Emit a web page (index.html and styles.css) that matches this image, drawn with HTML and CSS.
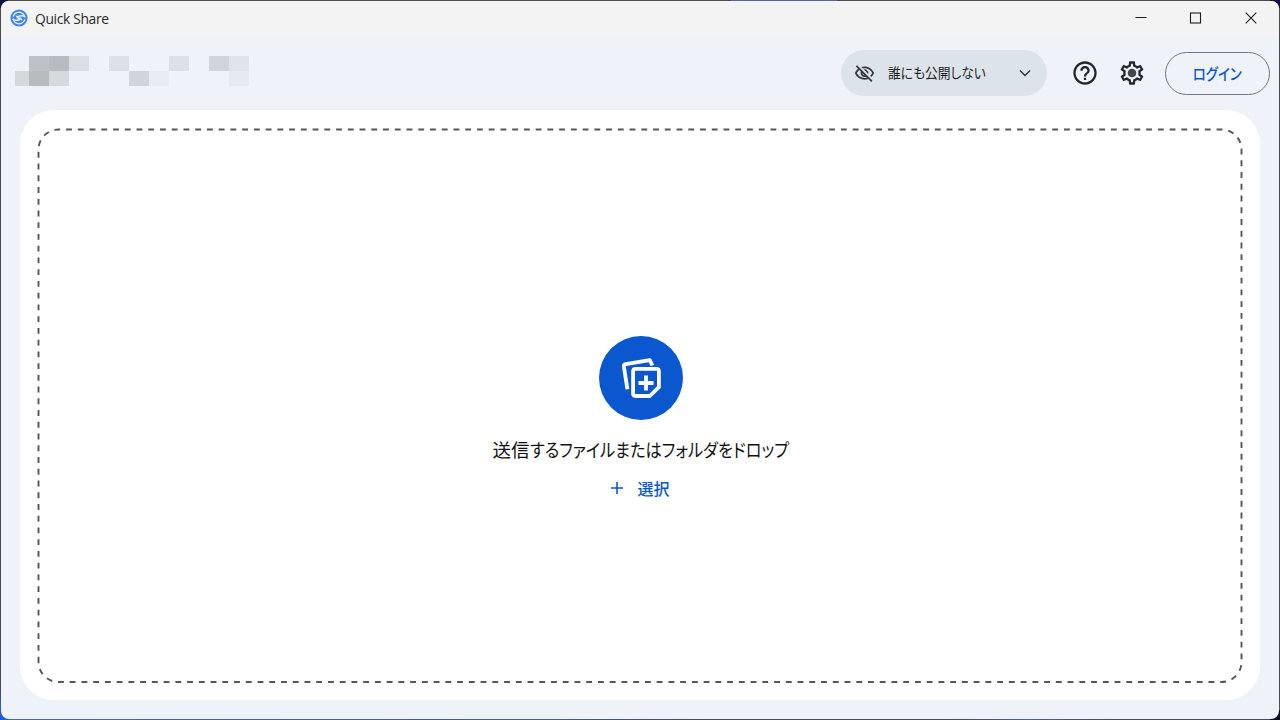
FILE: index.html
```html
<!DOCTYPE html>
<html lang="ja">
<head>
<meta charset="utf-8">
<title>Quick Share</title>
<link rel="stylesheet" href="styles.css">
</head>
<body>
<div class="desktop">
<div class="window">
  <header class="titlebar">
    <svg class="app-icon" viewBox="0 0 18 18"><circle cx="9" cy="9" r="8.6" fill="#3f83ee"/><g fill="none" stroke="#e4efff" stroke-width="1.4" stroke-linecap="round" stroke-linejoin="round"><path d="M3.3 7.1C4.4 3.7 8.4 2.2 11.6 3.8C13.3 4.7 14.3 6 14.7 7.7M14.7 10.9C13.6 14.3 9.6 15.8 6.4 14.2C4.7 13.3 3.7 12 3.3 10.3"/><path d="M3.3 10.2C5.6 11.8 7.5 11.6 9.8 10.5M14.7 7.8C12.4 6.2 10.5 6.4 8.2 7.5M6.5 7.2L8.3 9.3L10.6 9.1L11.7 10.8"/></g></svg>
    <span class="app-name">Quick Share</span>
    <div class="controls">
      <svg viewBox="0 0 16 16"><path d="M2.5 7.5H13.5"/></svg>
      <svg viewBox="0 0 16 16"><rect x="2.5" y="3" width="10" height="10"/></svg>
      <svg viewBox="0 0 16 16"><path d="M2.7 2.7L13.3 13.3M13.3 2.7L2.7 13.3"/></svg>
    </div>
  </header>
  <div class="toolbar">
    <svg class="device" viewBox="0 0 236 32" shape-rendering="crispEdges">
      <path fill="#bec2c8" d="M14 1h20v15H14z"/><path fill="#b8bbc1" d="M34 1h20v15H34z"/><path fill="#dbdfe2" d="M54 1h20v15H54z"/>
      <path fill="#d5d9dc" d="M0 16h14v15H0z"/><path fill="#b9bcbe" d="M14 16h20v15H14z"/><path fill="#d6dadd" d="M34 16h20v15H34z"/>
      <path fill="#dce0e8" d="M94 1h20v15H94zM154 1h20v15h-20z"/><path fill="#d1d4da" d="M114 16h20v15h-20zM194 1h20v15h-20z"/>
      <path fill="#e9ecf1" d="M134 16h20v15h-20z"/><path fill="#e0e3e7" d="M214 1h20v15h-20z"/><path fill="#e6e9ee" d="M214 16h20v15h-20z"/>
    </svg>
    <div class="visibility">
      <svg class="eye" viewBox="0 0 24 24"><path d="M12 6c3.79 0 7.17 2.13 8.82 5.5-.59 1.22-1.42 2.27-2.41 3.12l1.41 1.41c1.39-1.23 2.49-2.77 3.18-4.53C21.27 7.11 17 4 12 4c-1.27 0-2.49.2-3.64.57l1.65 1.65C10.66 6.09 11.32 6 12 6zm-1.07 1.14L13 9.21c.57.25 1.03.71 1.28 1.28l2.07 2.07c.08-.34.14-.7.14-1.07C16.5 9.01 14.48 7 12 7c-.37 0-.72.05-1.07.14zM2.01 3.87l2.68 2.68C3.06 7.83 1.77 9.53 1 11.5 2.73 15.89 7 19 12 19c1.52 0 2.98-.29 4.32-.82l3.42 3.42 1.41-1.41L3.42 2.45 2.01 3.87zm7.5 7.5l2.61 2.61c-.04.01-.08.02-.12.02-1.38 0-2.5-1.12-2.5-2.5 0-.05.01-.08.01-.13zm-3.4-3.4l1.75 1.75c-.23.55-.36 1.15-.36 1.78 0 2.48 2.02 4.5 4.5 4.5.63 0 1.23-.13 1.77-.36l.98.98c-.88.24-1.8.38-2.75.38-3.79 0-7.17-2.13-8.82-5.5.7-1.43 1.72-2.61 2.93-3.53z"/></svg>
      <span class="visibility-label">誰にも公開しない</span>
      <svg class="chevron" viewBox="0 0 12 12"><path d="M1 3.5L6 8.5L11 3.5"/></svg>
    </div>
    <svg class="tool help" viewBox="0 0 24 24"><path d="M11 18h2v-2h-2v2zm1-16C6.48 2 2 6.48 2 12s4.48 10 10 10 10-4.48 10-10S17.52 2 12 2zm0 18c-4.41 0-8-3.59-8-8s3.59-8 8-8 8 3.59 8 8-3.59 8-8 8zm0-14c-2.21 0-4 1.79-4 4h2c0-1.1.9-2 2-2s2 .9 2 2c0 2-3 1.75-3 5h2c0-2.25 3-2.5 3-5 0-2.21-1.79-4-4-4z"/></svg>
    <svg class="tool gear" viewBox="0 0 24 24"><path d="M19.43 12.98c.04-.32.07-.64.07-.98s-.03-.66-.07-.98l2.11-1.65c.19-.15.24-.42.12-.64l-2-3.46c-.09-.16-.26-.25-.44-.25-.06 0-.12.01-.17.03l-2.49 1c-.52-.4-1.08-.73-1.69-.98l-.38-2.65C14.46 2.18 14.25 2 14 2h-4c-.25 0-.46.18-.49.42l-.38 2.65c-.61.25-1.17.59-1.69.98l-2.49-1c-.06-.02-.12-.03-.18-.03-.17 0-.34.09-.43.25l-2 3.46c-.13.22-.07.49.12.64l2.11 1.65c-.04.32-.07.65-.07.98s.03.66.07.98l-2.11 1.65c-.19.15-.24.42-.12.64l2 3.46c.09.16.26.25.44.25.06 0 .12-.01.17-.03l2.49-1c.52.4 1.08.73 1.69.98l.38 2.65c.03.24.24.42.49.42h4c.25 0 .46-.18.49-.42l.38-2.65c.61-.25 1.17-.59 1.69-.98l2.49 1c.06.02.12.03.18.03.17 0 .34-.09.43-.25l2-3.46c.12-.22.07-.49-.12-.64l-2.11-1.65zm-1.98-1.71c.04.31.05.52.05.73 0 .21-.02.43-.05.73l-.14 1.13.89.7 1.08.84-.7 1.21-1.27-.51-1.04-.42-.9.68c-.43.32-.84.56-1.25.73l-1.06.43-.16 1.13-.2 1.35h-1.4l-.19-1.35-.16-1.13-1.06-.43c-.43-.18-.83-.41-1.23-.71l-.91-.7-1.06.43-1.27.51-.7-1.21 1.08-.84.89-.7-.14-1.13c-.03-.31-.05-.54-.05-.74s.02-.43.05-.73l.14-1.13-.89-.7-1.08-.84.7-1.21 1.27.51 1.04.42.9-.68c.43-.32.84-.56 1.25-.73l1.06-.43.16-1.13.2-1.35h1.39l.19 1.35.16 1.13 1.06.43c.43.18.83.41 1.23.71l.91.7 1.06-.43 1.27-.51.7 1.21-1.07.85-.89.7.14 1.13z"/><circle cx="12" cy="12" r="3.7" opacity=".85"/></svg>
    <button class="login"><span>ログイン</span></button>
  </div>
  <main class="panel">
    <svg class="dashes" viewBox="0 0 1240 590"><path d="M18.5 552.5V39.5A20 20 0 0 1 38.5 19.5H1201.5A20 20 0 0 1 1221.5 39.5V552A20 20 0 0 1 1201.5 572H38.5A20 20 0 0 1 18.5 552"/></svg>
    <div class="drop">
      <svg class="badge" viewBox="0 0 84 84"><circle cx="42" cy="42" r="42" fill="#0b57d0"/><g fill="none" stroke="#fff" stroke-width="3.8" stroke-linejoin="round"><path d="M53.4 29.5L50.8 24.1L26.7 28.1Q24.6 28.5 24.9 30.6L28.4 53.2"/><path d="M36.6 32.8H57.4Q59.9 32.8 59.9 35.3V51.2L50.8 60H36.6Q34.1 60 34.1 57.5V35.3Q34.1 32.8 36.6 32.8Z"/><path d="M47 39.5V54.5M39.5 47H54.5"/></g></svg>
      <p class="message">送信<span>するファイルまたはフォルダをドロップ</span></p>
      <div class="select"><svg viewBox="0 0 12 12"><path d="M6 0V12M0 6H12"/></svg><span>選択</span></div>
    </div>
  </main>
</div>
</div>
</body>
</html>
```

FILE: styles.css
```css
* { box-sizing: border-box; }
body { margin: 0; font-family: "Noto Sans CJK JP", sans-serif; }
.desktop {
  width: 1280px; height: 720px; padding: 1px; overflow: hidden;
  background:
    linear-gradient(#5563b4, #5563b4) 731px 0 / 106px 1px no-repeat,
    linear-gradient(90deg, #4a68a8, #3f5f8c 550px, #484b52 700px, #484b52 940px, #4d6485 1020px, #484b52 1110px) 8px 719px / 1262px 1px no-repeat,
    linear-gradient(#14143a, #14143a) 1270px 0 / 10px 8px no-repeat,
    linear-gradient(#0c1024, #0c1024) 1270px 710px / 10px 10px no-repeat,
    linear-gradient(#4b4b50, #4b4b50) 8px 0 / 1272px 720px no-repeat,
    linear-gradient(#14143a 0 8px, #4b4b50 8px 690px, #2459dc 705px);
}
.window { width: 1278px; height: 718px; border-radius: 8px; overflow: hidden; background: #eff3f9; display: flex; flex-direction: column; }
.titlebar { height: 35px; flex: none; background: #f3f3f3; display: flex; align-items: center; padding: 0 20px 1px 9px; }
.app-icon { width: 18px; height: 18px; }
.app-name { margin-left: 7px; font: 13.8px/18px "Open Sans", sans-serif; color: #292929; letter-spacing: -.32px; padding-top: 1px; }
.controls { margin-left: auto; display: flex; gap: 39px; }
.controls svg { width: 16px; height: 16px; fill: none; stroke: #1d1d1d; stroke-width: 1.1; }
.toolbar { height: 74px; flex: none; display: flex; align-items: center; padding: 0 9px 0 14px; }
.device { width: 236px; height: 32px; margin-top: -5px; }
.visibility { width: 206px; height: 46px; margin-left: auto; border-radius: 23px; background: #dde3ea; display: flex; align-items: center; padding: 0 16px 0 13px; }
.eye { width: 21px; height: 21px; fill: #34373b; }
.visibility-label { flex: 1; margin-left: 13px; font-size: 14px; line-height: 20px; color: #1f1f1f; white-space: nowrap; font-feature-settings: "palt"; transform: scaleX(.91); transform-origin: left; position: relative; top: -1px; }
.chevron { width: 12px; height: 12px; fill: none; stroke: #303236; stroke-width: 1.4; }
.tool { width: 28px; height: 28px; fill: #25282b; }
.help { margin-left: 24px; }
.gear { margin-left: 19px; }
.login { width: 105px; height: 43px; margin-left: 19px; border: 1px solid #74777b; border-radius: 22px; background: transparent; color: #0b57d0; font: 500 16px "Noto Sans CJK JP", sans-serif; font-feature-settings: "palt"; padding: 0; }
.login span { display: inline-block; transform: scaleX(.84); }
.panel { width: 1240px; height: 590px; margin-left: 19px; background: #fff; border-radius: 34px; display: grid; }
.dashes { grid-area: 1 / 1; width: 1240px; height: 590px; fill: none; stroke: #55565a; stroke-width: 1.9; stroke-dasharray: 5.87 5.87; }
.drop { grid-area: 1 / 1; display: flex; flex-direction: column; align-items: center; padding: 226px 0 0 1px; }
.badge { width: 84px; height: 84px; }
.message { width: 296px; margin: 15px 0 0; font-size: 18.5px; line-height: 28px; color: #111; white-space: nowrap; font-feature-settings: "palt"; }
.message span { display: inline-block; transform: scaleX(.875); transform-origin: left; }
.select { margin-top: 14px; display: flex; align-items: center; gap: 14px; color: #0b57d0; font-size: 16px; font-weight: 500; line-height: 22px; }
.select svg { width: 12px; height: 12px; fill: none; stroke: currentColor; stroke-width: 1.6; }
```
